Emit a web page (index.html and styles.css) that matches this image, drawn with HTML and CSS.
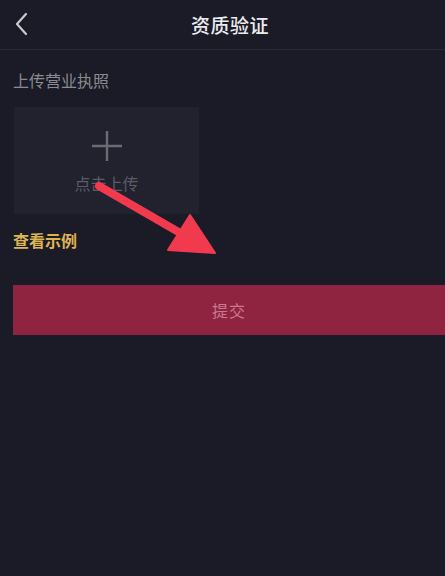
FILE: index.html
```html
<!DOCTYPE html>
<html lang="zh-CN">
<head>
    <meta charset="UTF-8">
    <meta name="viewport" content="width=device-width, initial-scale=1.0">
    <title>资质验证</title>
    <link rel="stylesheet" href="styles.css">
</head>
<body>
    <div class="header">
        <svg class="back" width="14" height="24" viewBox="0 0 14 24">
            <path d="M12 2 L3 12 L12 22" fill="none" stroke="#c9c9cf" stroke-width="2.2" stroke-linecap="round" stroke-linejoin="round"/>
        </svg>
        <h1>资质验证</h1>
    </div>

    <div class="content">
        <div class="label">上传营业执照</div>
        <div class="upload">
            <svg class="plus" width="32" height="32" viewBox="0 0 32 32">
                <path d="M16 1 V31 M1 16 H31" stroke="#6b6b76" stroke-width="2.4"/>
            </svg>
            <span>点击上传</span>
        </div>
        <a class="example">查看示例</a>
        <button class="submit">提交</button>
    </div>

    <svg class="arrow" width="445" height="576" viewBox="0 0 445 576">
        <line x1="99" y1="186" x2="182" y2="234" stroke="#f23a4e" stroke-width="8" stroke-linecap="round"/>
        <polygon points="190,215 168,250 215,253" fill="#f23a4e" stroke="#f23a4e" stroke-width="2" stroke-linejoin="round"/>
    </svg>
</body>
</html>
```

FILE: styles.css
```css
body {
    margin: 0;
    background-color: #1b1b27;
    font-family: "Noto Sans CJK SC", "Noto Sans", sans-serif;
    width: 445px;
    height: 576px;
    overflow: hidden;
    position: relative;
}
.header {
    height: 49px;
    border-bottom: 1px solid #2e2e3a;
    display: flex;
    align-items: center;
    justify-content: center;
    padding-left: 15px;
    position: relative;
}
.back {
    position: absolute;
    left: 14px;
    top: 12px;
}
.header h1 {
    margin: 0;
    font-size: 19px;
    font-weight: 500;
    color: #ececef;
    letter-spacing: 0.5px;
}
.content {
    padding: 19px 0 0 13px;
}
.label {
    font-size: 16px;
    color: #8a8a94;
    line-height: 22px;
}
.upload {
    margin-top: 16px;
    margin-left: 1px;
    width: 185px;
    height: 107px;
    background-color: #22222e;
    display: flex;
    flex-direction: column;
    align-items: center;
    padding-top: 23px;
    box-sizing: border-box;
}
.upload span {
    margin-top: 10px;
    font-size: 16px;
    color: #5b5b67;
    line-height: 22px;
}
.example {
    display: block;
    margin-top: 15px;
    font-size: 16px;
    font-weight: bold;
    color: #dcb452;
    line-height: 22px;
}
.submit {
    display: block;
    margin-top: 34px;
    width: 432px;
    height: 50px;
    border: none;
    background-color: #8f2440;
    color: #c97a8c;
    font-family: inherit;
    font-size: 16px;
    letter-spacing: 1px;
}
.arrow {
    position: absolute;
    left: 0;
    top: 0;
    pointer-events: none;
}
```
